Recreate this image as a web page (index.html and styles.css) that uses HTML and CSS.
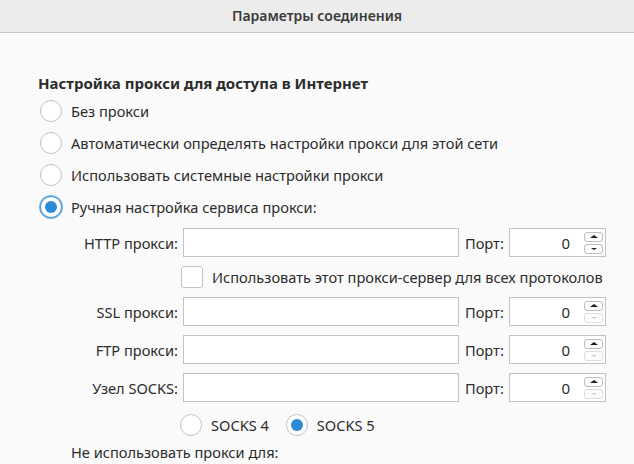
FILE: index.html
```html
<!DOCTYPE html>
<html lang="ru">
<head>
  <meta charset="UTF-8" />
  <title>Параметры соединения</title>
  <link rel="stylesheet" href="styles.css">
</head>
<body>
  <header class="titlebar">Параметры соединения</header>

  <main class="panel">
    <h2 class="section-title">Настройка прокси для доступа в Интернет</h2>

    <div class="choices">
      <label class="choice"><span class="radio"></span>Без прокси</label>
      <label class="choice"><span class="radio"></span>Автоматически определять настройки прокси для этой сети</label>
      <label class="choice"><span class="radio"></span>Использовать системные настройки прокси</label>
      <label class="choice"><span class="radio checked focused"></span>Ручная настройка сервиса прокси:</label>
    </div>

    <div class="proxy-grid">
      <span class="field-label">HTTP прокси:</span>
      <span class="text-field"></span>
      <span class="port-label">Порт:</span>
      <span class="port-field">
        <span class="port-value">0</span>
        <span class="spinner">
          <span class="spin up"></span>
          <span class="spin down"></span>
        </span>
      </span>

      <label class="share-row"><span class="checkbox"></span>Использовать этот прокси-сервер для всех протоколов</label>

      <span class="field-label">SSL прокси:</span>
      <span class="text-field"></span>
      <span class="port-label">Порт:</span>
      <span class="port-field">
        <span class="port-value">0</span>
        <span class="spinner">
          <span class="spin up"></span>
          <span class="spin down disabled"></span>
        </span>
      </span>

      <span class="field-label">FTP прокси:</span>
      <span class="text-field"></span>
      <span class="port-label">Порт:</span>
      <span class="port-field">
        <span class="port-value">0</span>
        <span class="spinner">
          <span class="spin up"></span>
          <span class="spin down disabled"></span>
        </span>
      </span>

      <span class="field-label">Узел SOCKS:</span>
      <span class="text-field"></span>
      <span class="port-label">Порт:</span>
      <span class="port-field">
        <span class="port-value">0</span>
        <span class="spinner">
          <span class="spin up"></span>
          <span class="spin down disabled"></span>
        </span>
      </span>
    </div>

    <div class="socks-row">
      <label class="choice"><span class="radio"></span>SOCKS 4</label>
      <label class="choice"><span class="radio checked"></span>SOCKS 5</label>
    </div>

    <p class="no-proxy">Не использовать прокси для:</p>
  </main>
</body>
</html>
```

FILE: styles.css
```css
body {
  margin: 0;
  font-family: "Noto Sans", sans-serif;
  font-size: 14.6px;
  color: #2c2c2c;
  background-color: #fafafa;
  overflow: hidden;
}

.titlebar {
  height: 32px;
  line-height: 32px;
  text-align: center;
  font-size: 14px;
  font-weight: 600;
  background-color: #ececec;
  border-bottom: 1px solid #c9c9c9;
  color: #3a3a3a;
}

.panel {
  padding: 0 0 0 38px;
}

.section-title {
  margin: 41px 0 0;
  font-size: 15px;
  font-weight: 700;
  line-height: 18px;
}

.choices {
  margin-top: 8px;
  display: flex;
  flex-direction: column;
  gap: 10px;
}

.choice {
  display: flex;
  align-items: center;
  gap: 9px;
  height: 22px;
  margin-left: 2px;
}

.radio {
  width: 20px;
  height: 20px;
  border: 1px solid #c4c4c4;
  border-radius: 50%;
  background-color: #fff;
  display: flex;
  align-items: center;
  justify-content: center;
  flex-shrink: 0;
}

.radio.checked::after {
  content: "";
  width: 12px;
  height: 12px;
  border-radius: 50%;
  background-color: #2b8bd6;
}

.radio.focused {
  border-color: #3f95d8;
  box-shadow: 0 0 0 1px #7fb6e3;
}

.proxy-grid {
  margin-top: 10px;
  display: grid;
  grid-template-columns: 145px 276px 50px 97px;
  row-gap: 9px;
  align-items: center;
}

.field-label {
  text-align: right;
  padding-right: 5px;
  white-space: nowrap;
}

.text-field,
.port-field {
  height: 27px;
  border: 1px solid #c2c2c2;
  background-color: #fff;
}

.port-label {
  padding-left: 6px;
}

.port-field {
  display: flex;
  align-items: center;
  justify-content: flex-end;
  padding-right: 2px;
}

.port-value {
  margin-right: 14px;
  font-size: 15px;
}

.spinner {
  display: flex;
  flex-direction: column;
  gap: 2px;
}

.spin {
  width: 17px;
  height: 8px;
  border: 1px solid #bdbdbd;
  border-radius: 3px;
  background-color: #fcfcfc;
  display: flex;
  align-items: center;
  justify-content: center;
}

.spin.up::after {
  content: "";
  border-left: 4px solid transparent;
  border-right: 4px solid transparent;
  border-bottom: 3px solid #1e1e1e;
}

.spin.down::after {
  content: "";
  border-left: 3px solid transparent;
  border-right: 3px solid transparent;
  border-top: 2px solid #1e1e1e;
}

.spin.disabled {
  border-color: #dedede;
}

.spin.disabled::after {
  border-top-color: #cfcfcf;
}

.share-row {
  grid-column: 2 / 5;
  display: flex;
  align-items: center;
  gap: 9px;
  height: 22px;
  margin-left: -2px;
  white-space: nowrap;
}

.checkbox {
  width: 20px;
  height: 20px;
  border: 1px solid #c4c4c4;
  border-radius: 3px;
  background-color: #fff;
}

.socks-row {
  margin: 12px 0 0 142px;
  display: flex;
  gap: 17px;
}

.socks-row .choice {
  margin-left: 0;
}

.no-proxy {
  margin: 7px 0 0 33px;
  line-height: 18px;
}
```
